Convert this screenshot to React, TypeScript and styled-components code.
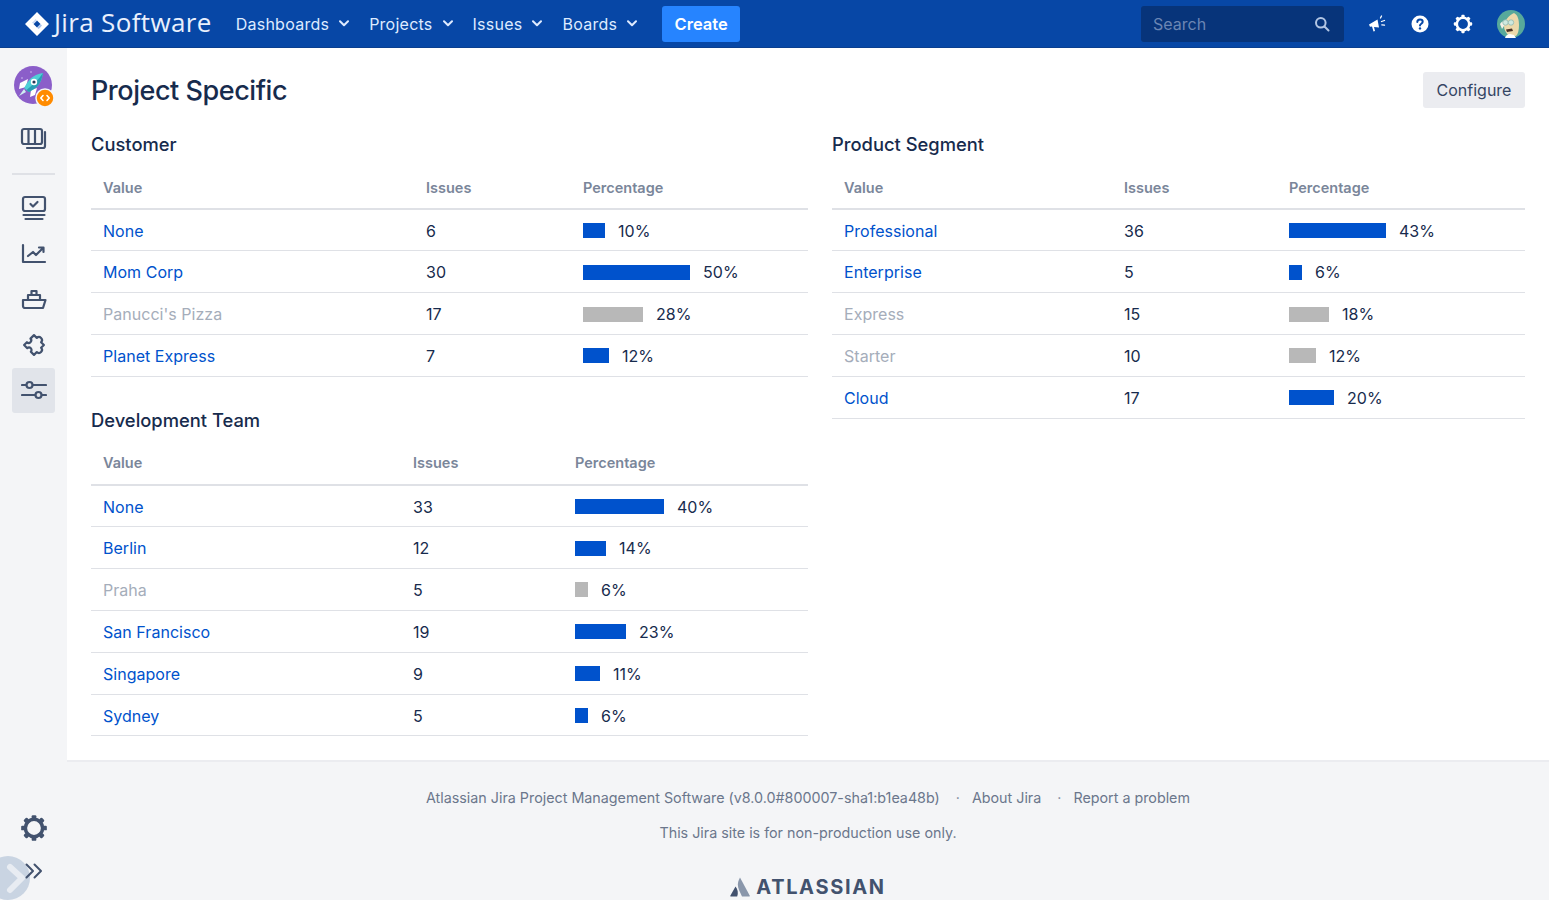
import * as React from 'react';
import styled, { createGlobalStyle } from 'styled-components';

const GlobalStyle = createGlobalStyle`
  html, body {
    margin: 0;
    padding: 0;
    height: 100%;
    background: #f4f5f7;
  }
  body {
    font-family: Inter, "Liberation Sans", sans-serif;
    color: #172b4d;
    overflow: hidden;
  }
`;

interface Row {
  name: string;
  issues: number;
  percent: number;
  bar: number;
  muted?: boolean;
}

const customer: Row[] = [
  { name: 'None', issues: 6, percent: 10, bar: 22 },
  { name: 'Mom Corp', issues: 30, percent: 50, bar: 107 },
  { name: "Panucci's Pizza", issues: 17, percent: 28, bar: 60, muted: true },
  { name: 'Planet Express', issues: 7, percent: 12, bar: 26 },
];

const team: Row[] = [
  { name: 'None', issues: 33, percent: 40, bar: 89 },
  { name: 'Berlin', issues: 12, percent: 14, bar: 31 },
  { name: 'Praha', issues: 5, percent: 6, bar: 13, muted: true },
  { name: 'San Francisco', issues: 19, percent: 23, bar: 51 },
  { name: 'Singapore', issues: 9, percent: 11, bar: 25 },
  { name: 'Sydney', issues: 5, percent: 6, bar: 13 },
];

const segment: Row[] = [
  { name: 'Professional', issues: 36, percent: 43, bar: 97 },
  { name: 'Enterprise', issues: 5, percent: 6, bar: 13 },
  { name: 'Express', issues: 15, percent: 18, bar: 40, muted: true },
  { name: 'Starter', issues: 10, percent: 12, bar: 27, muted: true },
  { name: 'Cloud', issues: 17, percent: 20, bar: 45 },
];

const StatTable = ({ title, rows, valueWidth, issuesWidth }: { title: string; rows: Row[]; valueWidth: number; issuesWidth: number }) => (
  <section>
    <SectionTitle>{title}</SectionTitle>
    <Table>
      <thead>
        <tr>
          <HeadCell $width={valueWidth}>Value</HeadCell>
          <HeadCell $width={issuesWidth}>Issues</HeadCell>
          <HeadCell>Percentage</HeadCell>
        </tr>
      </thead>
      <tbody>
        {rows.map((row) => (
          <tr key={row.name}>
            <Cell>
              <ValueLink $muted={row.muted}>{row.name}</ValueLink>
            </Cell>
            <Cell>{row.issues}</Cell>
            <Cell>
              <BarWrap>
                <Bar $width={row.bar} $muted={row.muted} />
                {row.percent}%
              </BarWrap>
            </Cell>
          </tr>
        ))}
      </tbody>
    </Table>
  </section>
);

const Chevron = () => (
  <svg width="10" height="7" viewBox="0 0 10 7" fill="none" stroke="#deebff" strokeWidth="2" strokeLinecap="round" strokeLinejoin="round">
    <path d="M1 1.2 5 5.200 9 1.200" />
  </svg>
);

const JiraMark = () => (
  <svg width="24" height="24" viewBox="0 0 24 24">
    <path fill="#fff" d="M12 0 24 12 12 24 0 12Zm0 8.500L8.500 12l3.500 3.500 3.500-3.500Z" />
    <path fill="#a9c4ee" d="M15.500 12 12 15.500l1.500 1.500c2-1 3-3 3.500-3.500Z" />
    <path fill="#c9daf5" d="M12 8.500 8.500 12 7 10.500c1.500-1 3-2.500 3.500-3.500Z" />
  </svg>
);

const RocketAvatar = () => (
  <svg width="41" height="42" viewBox="0 0 41 42">
    <circle cx="19" cy="19" r="19" fill="#8b5ec9" />
    <circle cx="8" cy="12" r="1" fill="#b598e0" />
    <circle cx="17" cy="6" r="1" fill="#b598e0" />
    <circle cx="27" cy="29" r="1" fill="#b598e0" />
    <path fill="#fff" d="M14 13 6 17l-1 6 7-2ZM23 22l-2 7-5 2 1-7Z" />
    <path fill="#4fd0d6" d="M29 7c-7 1-12 4-16 10l-3 5 5 4 5-3c6-4 8-10 9-16Z" />
    <path fill="#2a9db5" d="M29 7c-1 6-3 12-9 16l-5 3-2.500-2C19 19 25 13 29 7Z" />
    <circle cx="20" cy="16" r="3.200" fill="#fff" />
    <circle cx="20" cy="16" r="1.600" fill="#253858" />
    <path fill="#cfeef2" d="M10 23 5 30l7-4Z" />
    <circle cx="31" cy="32" r="9" fill="#ff8b00" stroke="#f4f5f7" strokeWidth="1.500" />
    <path fill="none" stroke="#fff" strokeWidth="1.600" strokeLinecap="round" strokeLinejoin="round" d="M29 29.500 26.800 32l2.200 2.500M33 29.500l2.200 2.500-2.200 2.500" />
  </svg>
);

const BoardIcon = () => (
  <svg width="28" height="24" viewBox="0 0 28 24" fill="none" stroke="#42526e" strokeWidth="2.200" strokeLinejoin="round" strokeLinecap="round">
    <rect x="2" y="2" width="20" height="15" rx="2" />
    <path d="M8.500 2v15M15 2v15M25 5v14a2 2 0 0 1-2 2H7" />
  </svg>
);

const ScreenIcon = () => (
  <svg width="26" height="26" viewBox="0 0 26 26" fill="none" stroke="#42526e" strokeWidth="2.200" strokeLinecap="round" strokeLinejoin="round">
    <rect x="2" y="2" width="22" height="14" rx="2" />
    <path d="M9.500 9l2.500 2.500 4.500-4.500M2.500 20h21M4.500 24h17" />
  </svg>
);

const ChartIcon = () => (
  <svg width="26" height="22" viewBox="0 0 26 22" fill="none" stroke="#42526e" strokeWidth="2.200" strokeLinecap="round" strokeLinejoin="round">
    <path d="M2 2v17h22M7 13l5-4 3 3 7-7M18 4.500h4.500V9" />
  </svg>
);

const ShipIcon = () => (
  <svg width="26" height="22" viewBox="0 0 26 22" fill="none" stroke="#42526e" strokeWidth="2.200" strokeLinejoin="round" strokeLinecap="round">
    <path d="M2 12h22.500L22 20H4a2 2 0 0 1-2-2ZM7 12V7h12v5M10.500 7V3h5v4" />
  </svg>
);

const PuzzleIcon = () => (
  <svg width="28" height="28" viewBox="0 0 28 28" fill="none" stroke="#42526e" strokeWidth="2.200" strokeLinejoin="round">
    <path transform="rotate(45 14 14) translate(1 -2)" d="M6 9h4a3 3 0 1 1 6 0h4v4a3 3 0 1 1 0 6v4h-4.500a2.400 2.400 0 0 0-5 0H6v-4a2.400 2.400 0 0 0 0-5Z" />
  </svg>
);

const SlidersIcon = () => (
  <svg width="26" height="20" viewBox="0 0 26 20" fill="none" stroke="#42526e" strokeWidth="2.200" strokeLinecap="round">
    <path d="M1 5h4M12 5h13M1 15h13M21 15h4" />
    <circle cx="8.500" cy="5" r="3" />
    <circle cx="17.500" cy="15" r="3" />
  </svg>
);

const GearIcon = ({ size, color }: { size: number; color: string }) => (
  <svg width={size} height={size} viewBox="0 0 24 24" fill="none">
    <circle cx="12" cy="12" r="7.400" stroke={color} strokeWidth="3" />
    {[0, 45, 90, 135, 180, 225, 270, 315].map((angle) => (
      <rect key={angle} x="10" y="1" width="4" height="3.500" rx="1" fill={color} transform={`rotate(${angle} 12 12)`} />
    ))}
  </svg>
);

const DoubleChevron = () => (
  <svg width="18" height="16" viewBox="0 0 18 16" fill="none" stroke="#42526e" strokeWidth="2" strokeLinecap="round" strokeLinejoin="round">
    <path d="M1.500 1.500 8 8l-6.500 6.500M9.500 1.500 16 8l-6.500 6.500" />
  </svg>
);

const SearchIcon = () => (
  <svg width="16" height="16" viewBox="0 0 16 16" fill="none" stroke="#b3c6e4" strokeWidth="2" strokeLinecap="round">
    <circle cx="6.800" cy="6.800" r="4.800" />
    <path d="M10.500 10.500 14.500 14.500" />
  </svg>
);

const Megaphone = () => (
  <svg width="18" height="18" viewBox="0 0 18 18" fill="#fff">
    <path d="M1 9.500 9.500 4.500l1.500 8-5-.5 1 4-1.500.5L4 11.500l-2 .2Z" />
    <path fill="none" stroke="#fff" strokeWidth="1.300" strokeLinecap="round" d="M12.500 3l1-2M13.500 6.500l3-1M13.800 9.800l2.700.4" />
  </svg>
);

const HelpIcon = () => (
  <svg width="18" height="18" viewBox="0 0 18 18">
    <circle cx="9" cy="9" r="8.500" fill="#fff" />
    <path fill="none" stroke="#0747a6" strokeWidth="2" strokeLinecap="round" d="M6.300 7c0-1.600 1.200-2.500 2.700-2.500s2.700.9 2.700 2.300c0 1.900-2.700 1.900-2.700 3.700" />
    <circle cx="9" cy="13.400" r="1.200" fill="#0747a6" />
  </svg>
);

const FaceAvatar = () => (
  <svg width="28" height="28" viewBox="0 0 28 28">
    <circle cx="14" cy="14" r="14" fill="#57a99b" />
    <path fill="#ecd9ab" d="M11 25c-2-3-4-5-4-9 0-5 5-11 10-13 4 2 5 7 5 12 0 5-1 9-3 11Z" />
    <path fill="#f4f0e6" d="M3 14c1-2 3-3 4.500-3L7 16l-2 3Z" />
    <circle cx="8.500" cy="12.500" r="2.700" fill="#cfe9df" stroke="#8fb7b0" strokeWidth="0.800" />
    <circle cx="14" cy="12.500" r="2.700" fill="#cfe9df" stroke="#8fb7b0" strokeWidth="0.800" />
    <path fill="#4a3226" d="M9 19.500l6-1 1 2.500-6 1Z" />
    <path fill="#fff" d="M8 28c1-3 3-4 5-4l4 1 2 3Z" />
  </svg>
);

const AtlassianMark = () => (
  <svg width="20" height="20" viewBox="0 0 20 20">
    <path fill="#8a97ab" d="M10 0.500C7.500 5 7.200 9 9 13l3 6.500h7.400a.5.500 0 0 0 .4-.7Z" />
    <path fill="#42526e" d="M5.500 9.500.3 18.800c-.2.300 0 .7.400.7h6.500c1.300-3 .6-7.500-1.700-10Z" />
  </svg>
);

export default function App() {
  return (
    <Page>
      <GlobalStyle />
      <TopBar>
        <Logo>
          <JiraMark />
          <LogoText>Jira Software</LogoText>
        </Logo>
        <Nav>
          {['Dashboards', 'Projects', 'Issues', 'Boards'].map((label) => (
            <NavItem key={label}>
              {label}
              <Chevron />
            </NavItem>
          ))}
          <CreateButton>Create</CreateButton>
        </Nav>
        <TopRight>
          <SearchBox>
            Search
            <SearchIcon />
          </SearchBox>
          <TopIcons>
            <TopIcon><Megaphone /></TopIcon>
            <TopIcon><HelpIcon /></TopIcon>
            <TopIcon><GearIcon size={20} color="#fff" /></TopIcon>
            <AvatarSlot><FaceAvatar /></AvatarSlot>
          </TopIcons>
        </TopRight>
      </TopBar>
      <Body>
        <Sidebar>
          <SideGroup>
            <ProjectAvatar><RocketAvatar /></ProjectAvatar>
            <SideItem><BoardIcon /></SideItem>
            <Divider />
            <SideItem><ScreenIcon /></SideItem>
            <SideItem><ChartIcon /></SideItem>
            <SideItem><ShipIcon /></SideItem>
            <SideItem><PuzzleIcon /></SideItem>
            <SideItem $active><SlidersIcon /></SideItem>
          </SideGroup>
          <SideGroup>
            <SideItem><GearIcon size={28} color="#42526e" /></SideItem>
            <SideItem $height={40}><DoubleChevron /></SideItem>
          </SideGroup>
          <ExpandHandle>
            <svg width="44" height="44" viewBox="0 0 44 44" fill="none" stroke="#e8ecf2" strokeWidth="6" strokeLinecap="round" strokeLinejoin="round">
              <path d="M24 11 36 22 24 34" />
            </svg>
          </ExpandHandle>
        </Sidebar>
        <Column>
          <Main>
            <PageHeader>
              <PageTitle>Project Specific</PageTitle>
              <ConfigureButton>Configure</ConfigureButton>
            </PageHeader>
            <Columns>
              <Stack>
                <StatTable title="Customer" rows={customer} valueWidth={323} issuesWidth={157} />
                <StatTable title="Development Team" rows={team} valueWidth={310} issuesWidth={162} />
              </Stack>
              <StatTable title="Product Segment" rows={segment} valueWidth={280} issuesWidth={165} />
            </Columns>
          </Main>
          <Footer>
            <FooterLine>
              <span>Atlassian Jira Project Management Software (v8.0.0#800007-sha1:b1ea48b)</span>
              <Dot>·</Dot>
              <span>About Jira</span>
              <Dot>·</Dot>
              <span>Report a problem</span>
            </FooterLine>
            <FooterNote>This Jira site is for non-production use only.</FooterNote>
            <FooterLogo>
              <AtlassianMark />
              ATLASSIAN
            </FooterLogo>
          </Footer>
        </Column>
      </Body>
    </Page>
  );
}

const Page = styled.div`
  height: 900px;
  overflow: hidden;
  display: flex;
  flex-direction: column;
`;

const TopBar = styled.header`
  height: 47px;
  flex: none;
  display: flex;
  align-items: center;
  background: #0747a6;
  border-bottom: 1px solid #0a3f8f;
  padding: 0 24px 0 25px;
`;

const Logo = styled.div`
  display: flex;
  align-items: center;
  gap: 5px;
  margin-right: 24px;
`;

const LogoText = styled.span`
  font-family: "Open Sans", sans-serif;
  font-size: 26px;
  line-height: 32px;
  margin-top: -3px;
  letter-spacing: 0.35px;
  color: #e9f0fd;
`;

const Nav = styled.nav`
  display: flex;
  align-items: center;
  gap: 20px;
`;

const NavItem = styled.a`
  display: flex;
  align-items: center;
  gap: 10px;
  font-size: 16px;
  letter-spacing: 0.25px;
  color: #deebff;
`;

const CreateButton = styled.button`
  height: 36px;
  width: 78px;
  margin-left: 5px;
  border: 0;
  border-radius: 3px;
  background: #2684ff;
  color: #fff;
  font: 600 16.5px Inter, sans-serif;
`;

const TopRight = styled.div`
  margin-left: auto;
  display: flex;
  align-items: center;
  gap: 23px;
`;

const SearchBox = styled.div`
  width: 203px;
  height: 36px;
  box-sizing: border-box;
  padding: 0 14px 0 12px;
  display: flex;
  align-items: center;
  justify-content: space-between;
  border-radius: 3px;
  background: #07347a;
  color: #6b86b4;
  font-size: 16px;
`;

const TopIcons = styled.div`
  display: flex;
  align-items: center;
  gap: 23px;
`;

const TopIcon = styled.span`
  display: flex;
  width: 20px;
  justify-content: center;
`;

const AvatarSlot = styled.span`
  display: flex;
  margin-left: 1px;
`;

const Body = styled.div`
  flex: 1;
  min-height: 0;
  display: flex;
`;

const Sidebar = styled.aside`
  position: relative;
  width: 67px;
  flex: none;
  box-sizing: border-box;
  padding: 18px 12px 9px;
  display: flex;
  flex-direction: column;
  justify-content: space-between;
  background: #f4f5f7;
`;

const SideGroup = styled.div`
  display: flex;
  flex-direction: column;
  align-items: center;
`;

const ProjectAvatar = styled.div`
  height: 42px;
  width: 43px;
  padding-left: 2px;
  box-sizing: border-box;
  margin-bottom: 8px;
`;

const SideItem = styled.div<{ $active?: boolean; $height?: number }>`
  position: relative;
  z-index: 1;
  width: 43px;
  height: ${(p) => p.$height ?? 45.5}px;
  display: flex;
  align-items: center;
  justify-content: center;
  border-radius: 3px;
  background: ${(p) => (p.$active ? '#e1e4ea' : 'transparent')};
`;

const Divider = styled.hr`
  width: 43px;
  height: 2px;
  border: 0;
  margin: 11px 0 11px;
  background: #dfe1e6;
`;

const ExpandHandle = styled.div`
  position: absolute;
  left: -14px;
  bottom: 0;
  width: 44px;
  height: 44px;
  border-radius: 50%;
  background: #c9d4e2;
  display: flex;
`;

const Column = styled.div`
  flex: 1;
  min-width: 0;
  display: flex;
  flex-direction: column;
`;

const Main = styled.main`
  height: 712px;
  flex: none;
  box-sizing: border-box;
  padding: 24px 24px 0;
  background: #fff;
`;

const PageHeader = styled.div`
  display: flex;
  align-items: flex-start;
  justify-content: space-between;
  height: 58px;
`;

const PageTitle = styled.h1`
  margin: 1px 0 0;
  font-size: 27px;
  line-height: 36px;
  font-weight: 500;
  letter-spacing: -0.45px;
  color: #172b4d;
`;

const ConfigureButton = styled.button`
  width: 102px;
  height: 36px;
  border: 0;
  border-radius: 3px;
  background: #ebecf0;
  color: #344563;
  font: 400 16px Inter, sans-serif;
`;

const Columns = styled.div`
  display: grid;
  grid-template-columns: 717px 1fr;
  gap: 24px;
  align-items: start;
`;

const Stack = styled.div`
  display: flex;
  flex-direction: column;
  gap: 29px;
`;

const SectionTitle = styled.h3`
  margin: 0 0 13px;
  font-size: 18.35px;
  line-height: 28px;
  font-weight: 500;
  color: #172b4d;
`;

const Table = styled.table`
  width: 100%;
  table-layout: fixed;
  border-collapse: collapse;
  font-size: 16px;
`;

const HeadCell = styled.th<{ $width?: number }>`
  width: ${(p) => (p.$width ? `${p.$width}px` : 'auto')};
  height: 38px;
  box-sizing: border-box;
  padding: 0 12px 5px;
  text-align: left;
  font-size: 14.5px;
  font-weight: 600;
  color: #7a869a;
  border-bottom: 2px solid #dfe1e6;
`;

const Cell = styled.td`
  height: 41.85px;
  box-sizing: border-box;
  padding: 1px 12px 0;
  letter-spacing: 0.03px;
  color: #172b4d;
  border-bottom: 1px solid #dfe1e6;
`;

const ValueLink = styled.a<{ $muted?: boolean }>`
  color: ${(p) => (p.$muted ? '#a5adba' : '#0052cc')};
`;

const BarWrap = styled.div`
  display: flex;
  align-items: center;
  gap: 13px;
`;

const Bar = styled.span<{ $width: number; $muted?: boolean }>`
  width: ${(p) => p.$width}px;
  height: 15px;
  background: ${(p) => (p.$muted ? '#b8b8b8' : '#0052cc')};
`;

const Footer = styled.footer`
  flex: 1;
  border-top: 2px solid #ebecf0;
  background: #f4f5f7;
  padding-top: 26px;
  display: flex;
  flex-direction: column;
  align-items: center;
  color: #6b778c;
  font-size: 14.3px;
  line-height: 20px;
  box-sizing: border-box;
`;

const FooterLine = styled.div`
  display: flex;
`;

const Dot = styled.span`
  margin: 0 12px 0 16px;
  color: #7a869a;
`;

const FooterNote = styled.div`
  margin-top: 15px;
`;

const FooterLogo = styled.div`
  margin-top: 34px;
  display: flex;
  align-items: center;
  gap: 6px;
  font-size: 20px;
  font-weight: 700;
  letter-spacing: 1.65px;
  color: #42526e;
`;
